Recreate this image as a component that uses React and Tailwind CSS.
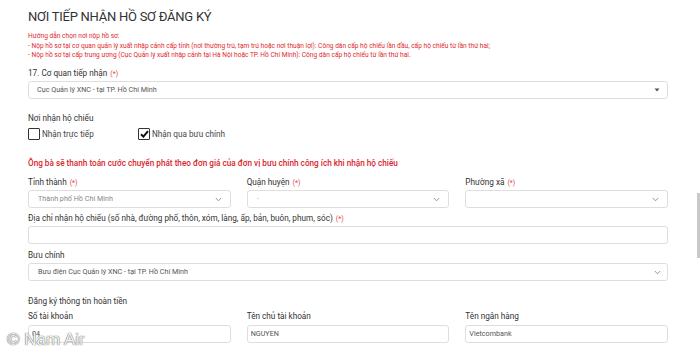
import React from "react";

const Req = () => <span className="text-[#e0463f] text-[7px] ml-[3px]">(*)</span>;

const Chevron = () => (
  <svg width="7" height="5" viewBox="0 0 7 5" className="shrink-0">
    <path d="M0.8 1 L3.5 3.8 L6.2 1" fill="none" stroke="#8a8a8a" strokeWidth="0.9" />
  </svg>
);

const Triangle = () => (
  <svg width="6" height="4" viewBox="0 0 6 4" className="shrink-0">
    <path d="M0.5 0.5 L5.5 0.5 L3 3.5 Z" fill="#555" />
  </svg>
);

const Box = ({ children, icon, className = "" }) => (
  <div className={"h-[18px] border border-[#dedede] rounded-[3px] bg-white flex items-center justify-between text-[7.2px] text-[#555] " + className}>
    <span className="truncate">{children}</span>
    {icon}
  </div>
);

const Label = ({ children, className = "" }) => (
  <div className={"h-[12px] leading-[12px] text-[8.2px] text-[#333] whitespace-nowrap " + className}>{children}</div>
);

const Check = ({ checked }) => (
  <div className="w-[12px] h-[12px] border-[1.5px] border-[#333] rounded-[1px] bg-white flex items-center justify-center shrink-0">
    {checked && (
      <svg width="9" height="8" viewBox="0 0 9 8">
        <path d="M1 4.2 L3.4 6.6 L8 1.2" fill="none" stroke="#111" strokeWidth="2" />
      </svg>
    )}
  </div>
);

export default function App() {
  return (
    <div className="relative w-[700px] h-[350px] overflow-hidden bg-white" style={{ fontFamily: "Roboto, 'Noto Sans', sans-serif" }}>
      <div className="pl-[28px] w-[668px] pt-[7px]">
        <div className="h-[20px] leading-[20px] text-[13px] tracking-[-0.25px] text-[#333]">NƠI TIẾP NHẬN HỒ SƠ ĐĂNG KÝ</div>
        <div className="mt-[5px] text-[6.6px] leading-[9.5px] text-[#e0282e] whitespace-nowrap">
          <div>Hướng dẫn chọn nơi nộp hồ sơ:</div>
          <div>- Nộp hồ sơ tại cơ quan quản lý xuất nhập cảnh cấp tỉnh (nơi thường trú, tạm trú hoặc nơi thuận lợi): Công dân cấp hộ chiếu lần đầu, cấp hộ chiếu từ lần thứ hai;</div>
          <div>- Nộp hồ sơ tại cấp trung ương (Cục Quản lý xuất nhập cảnh tại Hà Nội hoặc TP. Hồ Chí Minh): Công dân cấp hộ chiếu từ lần thứ hai.</div>
        </div>

        <Label className="mt-[6.5px]">17. Cơ quan tiếp nhận<Req /></Label>
        <Box className="mt-[2px] pl-[8px] pr-[7px]" icon={<Triangle />}>Cục Quản lý XNC - tại TP. Hồ Chí Minh</Box>

        <Label className="mt-[13px]">Nơi nhận hộ chiếu</Label>
        <div className="mt-[3px] h-[14px] flex items-center text-[8.2px] text-[#444]">
          <div className="flex items-center gap-[2px] w-[110px]">
            <Check />
            <span>Nhận trực tiếp</span>
          </div>
          <div className="flex items-center gap-[2px]">
            <Check checked />
            <span>Nhận qua bưu chính</span>
          </div>
        </div>

        <div className="mt-[16px] h-[12px] leading-[12px] text-[8.2px] font-medium text-[#d7262c] whitespace-nowrap">
          Ông bà sẽ thanh toán cước chuyển phát theo đơn giá của đơn vị bưu chính công ích khi nhận hộ chiếu
        </div>

        <div className="mt-[7px] grid grid-cols-3 gap-x-[16px]">
          <div>
            <Label>Tỉnh thành<Req /></Label>
            <Box className="mt-[2px] pl-[9px] pr-[8px] text-[#888]" icon={<Chevron />}>Thành phố Hồ Chí Minh</Box>
          </div>
          <div>
            <Label>Quận huyện<Req /></Label>
            <Box className="mt-[2px] pl-[9px] pr-[8px] text-[#bbb]" icon={<Chevron />}>-</Box>
          </div>
          <div>
            <Label>Phường xã<Req /></Label>
            <Box className="mt-[2px] pl-[9px] pr-[8px]" icon={<Chevron />}>{""}</Box>
          </div>
        </div>

        <Label className="mt-[4px]">Địa chỉ nhận hộ chiếu (số nhà, đường phố, thôn, xóm, làng, ấp, bản, buôn, phum, sóc)<Req /></Label>
        <Box className="mt-[2px] px-[8px]">{""}</Box>

        <Label className="mt-[5px]">Bưu chính</Label>
        <Box className="mt-[2px] pl-[9px] pr-[6px]" icon={<Chevron />}>Bưu điện Cục Quản lý XNC - tại TP. Hồ Chí Minh</Box>

        <Label className="mt-[14px]">Đăng ký thông tin hoàn tiền</Label>
        <div className="mt-[3px] grid grid-cols-3 gap-x-[16px]">
          <div>
            <Label>Số tài khoản</Label>
            <Box className="mt-[3px] px-[3px] text-[#333] text-[6.8px]">04</Box>
          </div>
          <div>
            <Label>Tên chủ tài khoản</Label>
            <Box className="mt-[3px] px-[3px] text-[#333] text-[6.8px]">NGUYEN</Box>
          </div>
          <div>
            <Label>Tên ngân hàng</Label>
            <Box className="mt-[3px] px-[3px] text-[#333] text-[6.8px]">Vietcombank</Box>
          </div>
        </div>
      </div>

      <div className="absolute left-[697px] top-[193px] w-[3px] h-[65px] bg-[#c9c9c9]" />

      <div className="absolute left-[7px] top-[330px] text-[17px] leading-[19px] text-[#f4f4f4] [text-shadow:0_0_1px_#666,0_0_1px_#666]" style={{ fontFamily: "'Liberation Sans', Arial, sans-serif" }}>
        © Nam Air
      </div>
    </div>
  );
}
